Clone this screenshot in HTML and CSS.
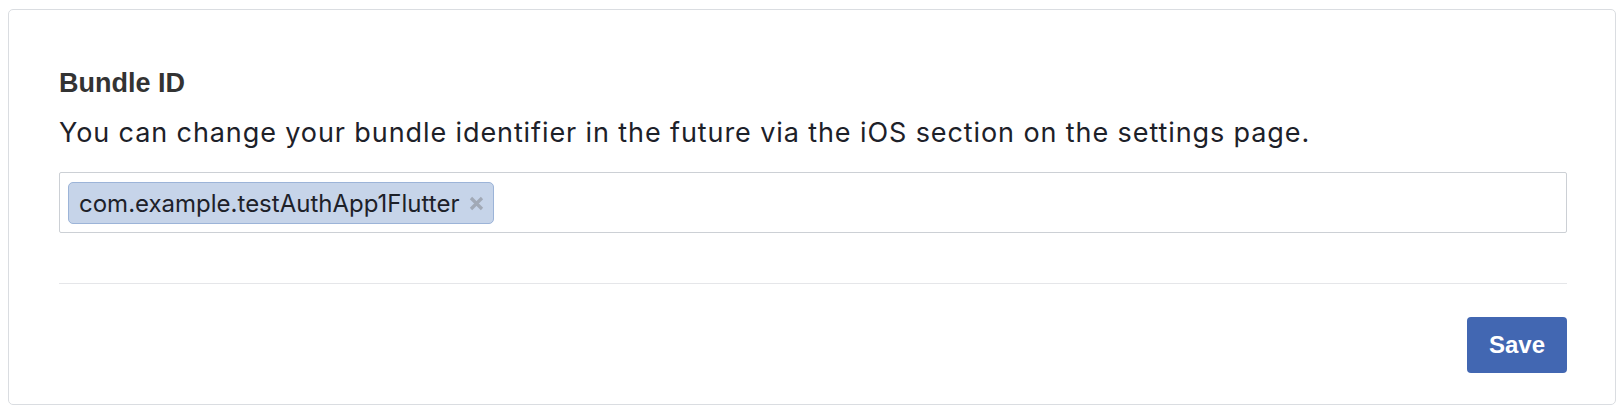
FILE: index.html
```html
<!DOCTYPE html>
<html lang="en">
<head>
<meta charset="utf-8">
<title>Bundle ID</title>
<link rel="stylesheet" href="styles.css">
</head>
<body>
<div class="card">
  <div class="section">
    <h2 class="title">Bundle ID</h2>
    <p class="desc">You can change your bundle identifier in the future via the iOS section on the settings page.</p>
    <div class="tag-input">
      <span class="tag"><span class="tag-text">com.example.testAuthApp1Flutter</span><svg class="tag-x" width="15" height="15" viewBox="0 0 15 15"><path d="M2 2 L13 13 M13 2 L2 13" stroke="#a1a9b6" stroke-width="3.2" stroke-linecap="butt" fill="none"/></svg></span>
    </div>
  </div>
  <div class="divider"></div>
  <div class="footer">
    <button class="btn-save">Save</button>
  </div>
</div>
</body>
</html>
```

FILE: styles.css
```css
html, body {
  margin: 0;
  padding: 0;
  background: #ffffff;
}
body {
  padding: 9px 8px 0 8px;
  font-family: "Liberation Sans", Arial, sans-serif;
}
.card {
  border: 1px solid #dadde1;
  border-radius: 5px;
  background: #fff;
  padding: 0 48px 0 50px;
  height: 396px;
  box-sizing: border-box;
}
.section {
  padding-top: 57px;
}
.title {
  margin: 0;
  font-size: 27px;
  line-height: 32px;
  font-weight: bold;
  color: #333333;
}
.desc {
  margin: 18px 0 0 0;
  font-family: Inter, "Liberation Sans", sans-serif;
  font-size: 27px;
  letter-spacing: 0.9px;
  line-height: 32px;
  color: #1d2129;
}
.tag-input {
  margin-top: 23px;
  height: 61px;
  box-sizing: border-box;
  border: 1px solid #ccd0d5;
  border-radius: 2px;
  padding: 9px 8px 8px 8px;
  display: flex;
  align-items: flex-start;
}
.tag {
  display: inline-flex;
  align-items: center;
  height: 42px;
  box-sizing: border-box;
  border: 1px solid #9cb4d8;
  border-radius: 5px;
  background: #c6d4e9;
  padding: 0 9px 0 10px;
  gap: 10px;
}
.tag-text {
  font-family: Inter, "Liberation Sans", sans-serif;
  font-size: 24px;
  color: #1d2129;
}
.tag-x {
  display: block;
  margin-top: 1px;
}
.divider {
  margin-top: 50px;
  height: 1px;
  background: #e5e6e9;
}
.footer {
  display: flex;
  justify-content: flex-end;
  padding-top: 33px;
}
.btn-save {
  width: 100px;
  height: 56px;
  border: none;
  border-radius: 4px;
  background: #4267b2;
  color: #ffffff;
  font-family: "Liberation Sans", Arial, sans-serif;
  font-size: 24px;
  font-weight: bold;
  padding: 0;
}
```
